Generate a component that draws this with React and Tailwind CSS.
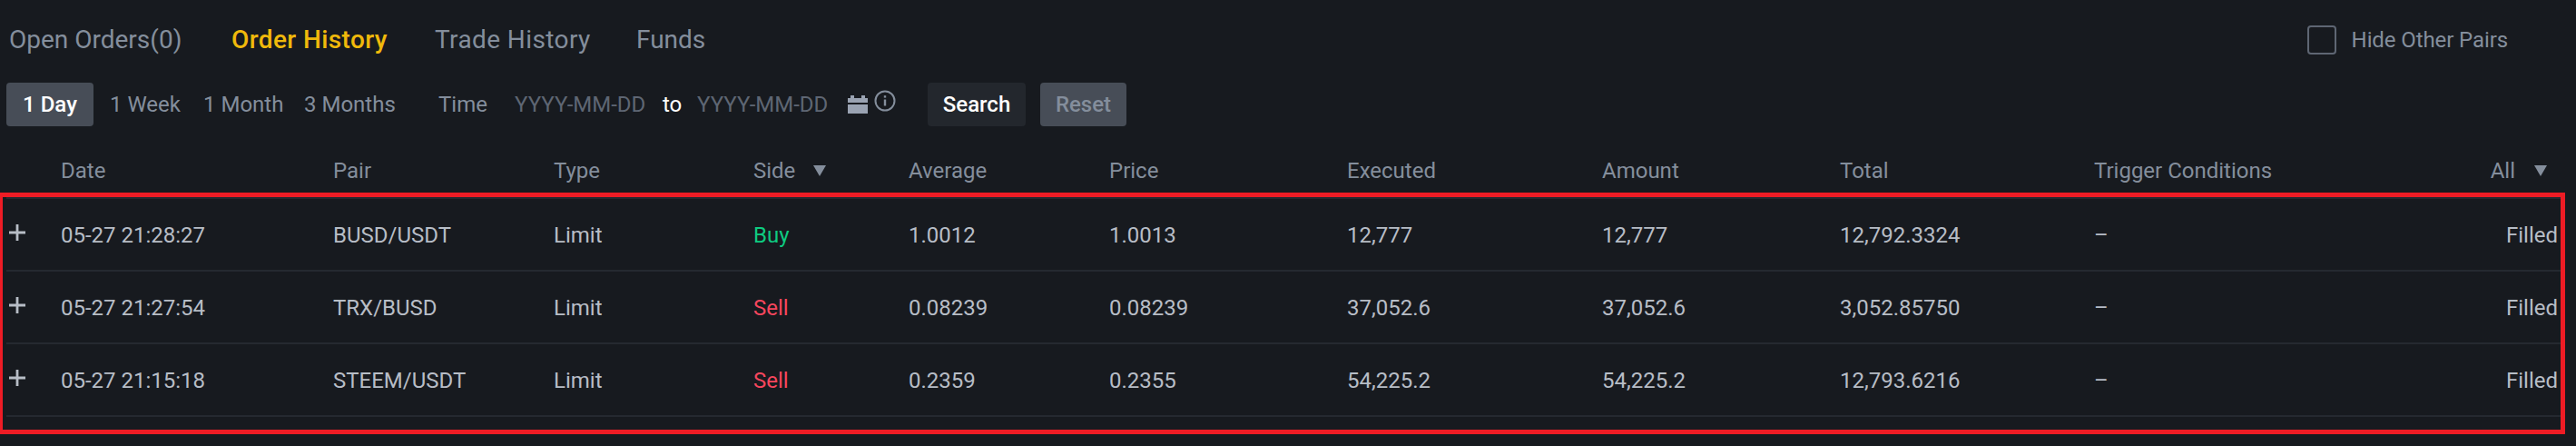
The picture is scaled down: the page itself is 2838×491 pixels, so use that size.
const COLS = 'grid grid-cols-[60px_300px_243px_220px_171px_221px_262px_281px_262px_280px_1fr_auto]';

const ORDERS = [
  { date: '05-27 21:28:27', pair: 'BUSD/USDT', side: 'Buy', average: '1.0012', price: '1.0013', executed: '12,777', amount: '12,777', total: '12,792.3324' },
  { date: '05-27 21:27:54', pair: 'TRX/BUSD', side: 'Sell', average: '0.08239', price: '0.08239', executed: '37,052.6', amount: '37,052.6', total: '3,052.85750' },
  { date: '05-27 21:15:18', pair: 'STEEM/USDT', side: 'Sell', average: '0.2359', price: '0.2355', executed: '54,225.2', amount: '54,225.2', total: '12,793.6216' },
];

function Caret({ className }) {
  return (
    <svg viewBox="0 0 14 12" className={className} fill="#848e9c">
      <path d="M0 0h14L7 12z" />
    </svg>
  );
}

function CalendarIcon() {
  return (
    <svg viewBox="0 0 22 20" className="w-[22px] h-[20px]" fill="#9aa3b2">
      <path d="M3 0h4v3h8V0h4v3h3v5H0V3h3zM0 10h22v10H0z" />
    </svg>
  );
}

function InfoIcon() {
  return (
    <svg viewBox="0 0 24 24" className="w-[24px] h-[24px] mb-[8px]" fill="none" stroke="#848e9c" strokeWidth="2">
      <circle cx="12" cy="12" r="10.5" />
      <path d="M12 10.5v7" strokeWidth="2.4" />
      <path d="M12 6.2v2.4" strokeWidth="2.4" />
    </svg>
  );
}

function PlusIcon() {
  return (
    <svg viewBox="0 0 18 18" className="w-[18px] h-[18px] ml-[3px] mb-[7px]" fill="#b7bdc6">
      <path d="M7.6 0h2.8v7.6H18v2.8h-7.6V18H7.6v-7.6H0V7.6h7.6z" />
    </svg>
  );
}

export default function App() {
  return (
    <div className="w-[2838px] h-[491px] bg-[#171a1f] overflow-hidden font-['Roboto',sans-serif] text-[24px] text-[#848e9c]">
      {/* Tabs */}
      <div className="h-[91px] flex items-start pt-[22px] pl-[10px] pr-[75px] text-[28px] leading-[44px]">
        <span className="w-[245px]">Open Orders(0)</span>
        <span className="w-[224px] text-[#f0b90b] font-medium tracking-[0.4px]">Order History</span>
        <span className="w-[222px] tracking-[0.4px]">Trade History</span>
        <span>Funds</span>
        <div className="ml-auto flex items-center gap-[17px] text-[24px]">
          <span className="w-[32px] h-[32px] rounded-[4px] border-2 border-[#5e6673]" />
          <span className="tracking-[-0.1px]">Hide Other Pairs</span>
        </div>
      </div>

      {/* Filters */}
      <div className="h-[48px] flex items-center pl-[7px]">
        <button className="w-[96px] h-[48px] rounded-[4px] bg-[#474d57] text-white font-medium">1 Day</button>
        <span className="ml-[18px] w-[103px]">1 Week</span>
        <span className="w-[111px]">1 Month</span>
        <span className="w-[148px]">3 Months</span>
        <span className="w-[84px]">Time</span>
        <span className="w-[163px] text-[#5e6673]">YYYY-MM-DD</span>
        <span className="w-[38px] text-white">to</span>
        <span className="w-[166px] text-[#5e6673]">YYYY-MM-DD</span>
        <div className="flex items-center gap-[7px]">
          <CalendarIcon />
          <InfoIcon />
        </div>
        <button className="ml-[35px] w-[108px] h-[48px] rounded-[4px] bg-[#23272d] text-white font-medium">Search</button>
        <button className="ml-[16px] w-[95px] h-[48px] rounded-[4px] bg-[#474d57] text-[#848e9c] font-medium">Reset</button>
      </div>

      {/* Table header */}
      <div className={`${COLS} h-[73px] pl-[7px] pr-[32px] items-center pt-[24px]`}>
        <span />
        <span>Date</span>
        <span>Pair</span>
        <span>Type</span>
        <span className="flex items-center gap-[20px]">Side <Caret className="w-[14px] h-[12px]" /></span>
        <span>Average</span>
        <span>Price</span>
        <span>Executed</span>
        <span>Amount</span>
        <span>Total</span>
        <span>Trigger Conditions</span>
        <span className="flex items-center justify-end gap-[21px]">All <Caret className="w-[14px] h-[12px]" /></span>
      </div>

      {/* Rows, framed in red */}
      <div className="mr-[12px] h-[266px] border-t-[5px] border-b-[5px] border-l-[3px] border-r-[5px] border-[#ee1c25] pl-[4px] text-[#b7bdc6]">
        <div className="h-[2px] bg-[#252930]" />
        {ORDERS.map(o => (
          <div key={o.date} className={`${COLS} h-[80px] border-b-2 border-[#252930] items-center pr-[3px] pt-[2px]`}>
            <PlusIcon />
            <span>{o.date}</span>
            <span>{o.pair}</span>
            <span>Limit</span>
            <span className={o.side === 'Buy' ? 'text-[#0ecb81]' : 'text-[#f6465d]'}>{o.side}</span>
            <span>{o.average}</span>
            <span>{o.price}</span>
            <span>{o.executed}</span>
            <span>{o.amount}</span>
            <span>{o.total}</span>
            <span>–</span>
            <span className="text-right">Filled</span>
          </div>
        ))}
      </div>
    </div>
  );
}
